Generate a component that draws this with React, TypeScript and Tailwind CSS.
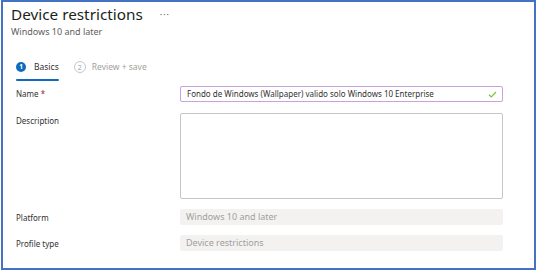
import React from 'react';

const font = { fontFamily: '"Noto Sans", "Open Sans", sans-serif' };

function Row({ label, required, children }: { label: string; required?: boolean; children: React.ReactNode }) {
  return (
    <div className="flex items-start">
      <div className="w-[177px] shrink-0 pl-[13px] text-[8px] text-[#323130]">
        {label}
        {required && <span className="text-[#a4262c]"> *</span>}
      </div>
      {children}
    </div>
  );
}

export default function App() {
  return (
    <div className="w-[537px] h-[271px] bg-white" style={font}>
      <div className="ml-[1px] w-[535px] h-[270px] border-2 border-[#4472c4] box-border">
        {/* Header */}
        <div className="pl-[8px]">
          <div className="flex items-center">
            <h1 className="text-[15.3px] leading-[24px] text-[#201f1e]">Device restrictions</h1>
            <span className="ml-[17px] text-[9px] text-[#605e5c] tracking-[1px] leading-none">···</span>
          </div>
          <div className="text-[9px] leading-[10px] text-[#605e5c] mt-[1px]">Windows 10 and later</div>
        </div>

        {/* Steps */}
        <div className="flex items-start pl-[13px] mt-[23px]">
          <div className="flex flex-col">
            <div className="flex items-center h-[14px]">
              <span className="w-[10px] h-[10px] rounded-full bg-[#0f6cbd] text-white text-[6.5px] font-bold flex items-center justify-center leading-none">1</span>
              <span className="ml-[8px] text-[8.5px] text-[#323130]">Basics</span>
            </div>
            <div className="h-[2px] bg-[#0f6cbd] mt-[5px] rounded-sm" />
          </div>
          <div className="flex items-center h-[14px] ml-[15px]">
            <span className="w-[12px] h-[12px] rounded-full border border-[#c8c6c4] text-[#a19f9d] text-[7px] flex items-center justify-center leading-none">2</span>
            <span className="ml-[6px] text-[8.5px] text-[#a19f9d]">Review + save</span>
          </div>
        </div>

        {/* Form */}
        <div className="mt-[7px] flex flex-col">
          <Row label="Name" required>
            <div className="w-[323px] h-[16px] border border-[#c8a2dc] rounded-[2px] flex items-center justify-between pl-[6px] pr-[5px] mt-[-2px]">
              <span className="text-[8px] text-[#323130] whitespace-nowrap">Fondo de Windows (Wallpaper) valido solo Windows 10 Enterprise</span>
              <svg width="9" height="7" viewBox="0 0 9 7" fill="none">
                <path d="M1 3.8 L3.3 6 L8 1" stroke="#7cc242" strokeWidth="1.2" />
              </svg>
            </div>
          </Row>
          <div className="mt-[13px]">
            <Row label="Description">
              <div className="w-[323px] h-[86px] border border-[#c8c6c4] rounded-[2px] mt-[-2px]" />
            </Row>
          </div>
          <div className="mt-[13px]">
            <Row label="Platform">
              <div className="w-[323px] h-[16px] bg-[#f3f2f1] rounded-[2px] flex items-center pl-[6px] text-[9px] text-[#a19f9d] mt-[-3px]">
                Windows 10 and later
              </div>
            </Row>
          </div>
          <div className="mt-[13px]">
            <Row label="Profile type">
              <div className="w-[323px] h-[16px] bg-[#f3f2f1] rounded-[2px] flex items-center pl-[6px] text-[9px] text-[#a19f9d] mt-[-3px]">
                Device restrictions
              </div>
            </Row>
          </div>
        </div>
      </div>
    </div>
  );
}
